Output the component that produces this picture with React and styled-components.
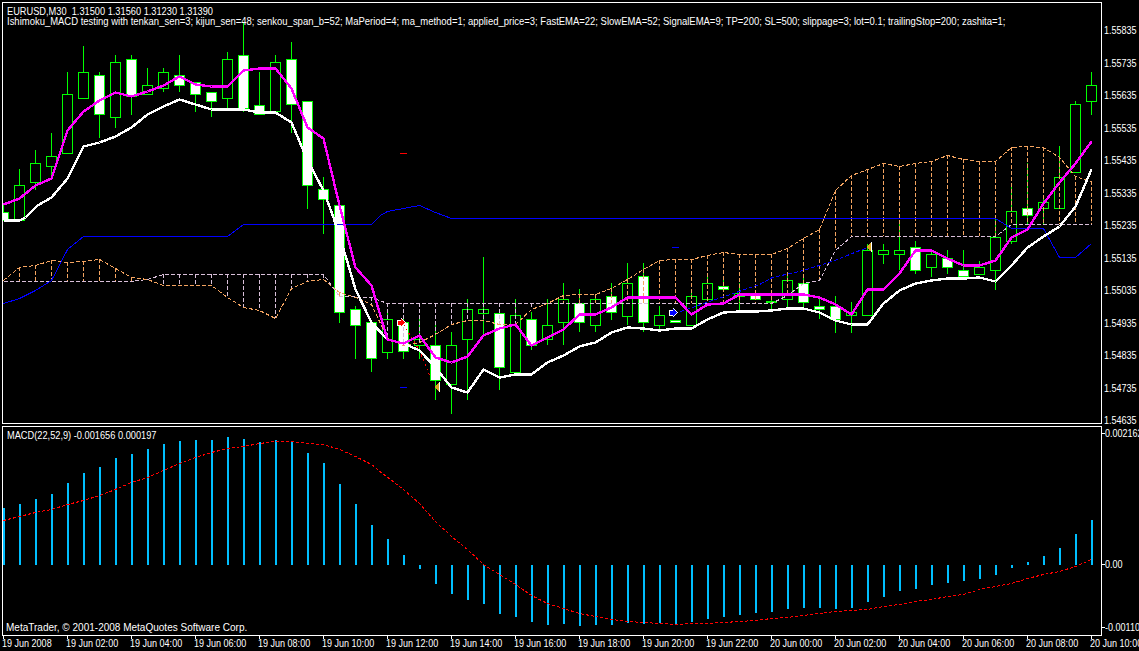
import React from "react";
import styled, { createGlobalStyle } from "styled-components";

const GlobalStyle = createGlobalStyle`
  html, body {
    margin: 0;
    background: #000;
  }
`;

const Terminal = styled.div`
  display: grid;
  grid-template-columns: 1100px 37px;
  grid-template-rows: 423px 210px 16px;
  width: 1139px;
  height: 651px;
  box-sizing: border-box;
  padding: 2px 0 0 2px;
  overflow: hidden;
  background: #000;
  color: #fff;
  font-family: "Liberation Sans", Arial, sans-serif;
  font-size: 11px;
  line-height: 10px;
  white-space: nowrap;
`;

const Pane = styled.div`
  position: relative;
  box-sizing: border-box;
  height: ${({ $h }) => $h}px;
  margin-top: ${({ $mt }) => $mt || 0}px;
  border: 1px solid #fff;
  overflow: hidden;
`;

const Plot = styled.svg`
  display: block;
  shape-rendering: crispEdges;
`;

const Legend = styled.div`
  position: absolute;
  left: 4px;
  top: 3px;
  display: flex;
  flex-direction: column;
  align-items: flex-start;
`;

/* the platform's bitmap font is as tall as Arial at 11px but much narrower */
const Squeezed = styled.span`
  display: inline-block;
  transform: scaleX(${({ $sx }) => $sx || 0.82});
  transform-origin: left center;
`;

const Copyright = styled.div`
  position: absolute;
  left: 3px;
  bottom: 3px;
`;

const PriceAxis = styled.div`
  display: flex;
  flex-direction: column;
  padding-top: 11.75px;
  height: 422px;
  box-sizing: border-box;
`;

const PriceRow = styled.div`
  flex: none;
  display: flex;
  align-items: center;
  gap: 2px;
  height: 32.5px;
  &::before {
    content: "";
    width: 3px;
    height: 1px;
    background: #fff;
  }
`;

const MacdAxis = styled.div`
  display: flex;
  flex-direction: column;
  padding-top: 2px;
  overflow: hidden;
`;

const MacdRow = styled.div`
  display: flex;
  align-items: center;
  height: 12px;
  margin-top: ${({ $mt }) => $mt || 0}px;
  &::before {
    content: "";
    flex: none;
    width: 3px;
    height: 1px;
    background: #fff;
  }
`;

const TimeAxis = styled.div`
  grid-column: 1 / 3;
  display: flex;
  overflow: hidden;
`;

const TimeLabel = styled.div`
  flex: none;
  width: 64px;
  position: relative;
  padding-top: 3px;
  &::before {
    content: "";
    position: absolute;
    left: 1px;
    top: 0;
    width: 1px;
    height: 4px;
    background: #fff;
  }
`;

const GREEN = "#00ff00";
const ORANGE = "#f4a460";
const THISTLE = "#d8bfd8";
const BLUE = "#0000ff";
const RED = "#ff0000";
const SKY = "#00bfff";

const barX = (i) => 3 + 16 * i;

// hi, body top, body bottom, lo, 1 = bear (white body)
const candles = [
  [205, 212, 220, 220, 1], [169, 185, 220, 220, 0], [150, 163, 182, 190, 0], [133, 156, 166, 175, 0],
  [72, 94, 153, 153, 0], [46, 72, 98, 98, 0], [72, 75, 114, 138, 1], [55, 62, 117, 128, 0],
  [55, 59, 96, 115, 1], [68, 85, 94, 95, 0], [68, 72, 88, 92, 0], [55, 75, 85, 92, 1],
  [82, 82, 94, 112, 1], [92, 92, 101, 117, 1], [52, 59, 98, 108, 0], [23, 55, 108, 112, 1],
  [72, 105, 114, 114, 1], [55, 62, 111, 111, 0], [42, 59, 104, 133, 1], [101, 101, 185, 209, 1],
  [177, 189, 199, 234, 1], [205, 205, 312, 323, 1], [306, 309, 325, 359, 1], [322, 322, 358, 372, 1],
  [310, 319, 352, 359, 0], [318, 322, 351, 359, 1], [317, 339, 345, 359, 0], [325, 345, 380, 400, 1],
  [332, 345, 384, 414, 0], [299, 309, 339, 400, 0], [257, 309, 313, 334, 0], [309, 313, 367, 390, 1],
  [299, 315, 372, 372, 0], [312, 319, 345, 350, 1], [299, 325, 339, 345, 0], [283, 299, 322, 345, 0],
  [289, 303, 322, 332, 1], [294, 299, 325, 332, 0], [283, 296, 312, 320, 1], [263, 283, 316, 325, 0],
  [263, 276, 322, 332, 1], [306, 315, 325, 332, 0], [320, 320, 322, 322, 1], [290, 296, 325, 325, 0],
  [275, 283, 299, 300, 0], [280, 286, 289, 292, 1], [283, 293, 296, 310, 0], [290, 295, 299, 299, 1],
  [290, 301, 302, 309, 0], [274, 280, 299, 309, 0], [274, 283, 302, 307, 1], [296, 306, 309, 319, 1],
  [296, 306, 319, 333, 1], [302, 312, 315, 333, 0], [244, 250, 315, 315, 0], [244, 250, 254, 264, 0],
  [224, 250, 254, 270, 0], [241, 247, 270, 274, 1], [250, 254, 267, 277, 0], [250, 258, 267, 274, 1],
  [250, 270, 276, 280, 1], [261, 267, 274, 274, 0], [217, 237, 270, 290, 0], [183, 211, 241, 244, 0],
  [163, 208, 215, 225, 1], [198, 202, 208, 225, 0], [146, 177, 208, 208, 0], [101, 104, 172, 172, 0],
  [72, 85, 101, 115, 0],
];

const whiteLine = [
  [3, 220], [19, 220], [25, 217], [37, 205], [51, 197], [67, 178], [83, 146], [99, 142], [115, 136], [131, 127],
  [147, 114], [163, 106], [179, 99], [195, 104], [211, 109], [227, 109], [243, 109], [259, 112], [275, 112],
  [291, 122], [307, 160], [323, 190], [333, 217], [345, 255], [355, 289], [371, 322], [387, 339], [403, 343],
  [419, 350], [435, 367], [451, 387], [467, 392], [483, 369], [499, 377], [515, 374], [531, 374], [547, 362],
  [563, 355], [579, 346], [595, 342], [611, 332], [627, 327], [643, 328], [659, 330], [675, 328], [691, 328],
  [707, 319], [723, 312], [739, 311], [755, 311], [771, 310], [787, 308], [803, 308], [819, 312], [835, 320],
  [851, 324], [867, 324], [883, 303], [899, 290], [915, 283], [931, 280], [947, 278], [963, 278], [979, 277],
  [995, 281], [1011, 265], [1027, 247], [1043, 236], [1059, 226], [1075, 206], [1091, 169],
];

const magentaLine = [
  [3, 204], [19, 198], [35, 185], [51, 178], [67, 130], [83, 111], [99, 100], [115, 92], [131, 96], [147, 91],
  [163, 85], [179, 76], [195, 84], [211, 86], [227, 86], [243, 70], [259, 68], [275, 68], [291, 88], [307, 127],
  [323, 138], [339, 205], [355, 267], [371, 285], [387, 339], [403, 343], [419, 335], [435, 357], [451, 362],
  [467, 356], [483, 335], [499, 328], [515, 324], [531, 345], [547, 337], [563, 329], [579, 314], [595, 314],
  [611, 307], [627, 297], [643, 297], [659, 297], [675, 297], [691, 314], [707, 304], [723, 303], [739, 294],
  [755, 294], [771, 294], [787, 294], [803, 294], [819, 297], [835, 304], [851, 314], [867, 289], [883, 289],
  [899, 273], [915, 250], [931, 250], [947, 258], [963, 265], [979, 265], [995, 260], [1011, 237], [1027, 229],
  [1043, 203], [1059, 182], [1075, 163], [1091, 141],
];

const blueLine = [
  [3, 303], [19, 298], [35, 290], [51, 280], [67, 249], [83, 236], [227, 236], [243, 224], [371, 224], [380, 215],
  [387, 211], [403, 208], [419, 205], [435, 212], [451, 218], [995, 218], [1011, 228], [1043, 228], [1059, 257],
  [1075, 257], [1091, 243],
];

const senkouA = [
  [3, 280], [19, 267], [35, 265], [51, 260], [67, 262], [83, 261], [99, 259], [115, 268], [131, 277], [147, 279],
  [163, 285], [179, 285], [195, 285], [211, 285], [227, 297], [243, 307], [259, 310], [275, 318], [291, 288],
  [307, 281], [323, 279], [339, 292], [355, 297], [371, 304], [387, 338], [403, 345], [419, 342], [435, 334],
  [451, 324], [467, 320], [483, 320], [499, 324], [515, 324], [531, 309], [547, 303], [563, 295], [579, 294],
  [595, 294], [611, 288], [627, 279], [643, 269], [659, 260], [675, 259], [691, 259], [707, 255], [723, 252],
  [739, 254], [755, 254], [771, 254], [787, 248], [803, 238], [819, 229], [835, 190], [851, 175], [867, 169],
  [883, 163], [899, 166], [915, 163], [931, 161], [947, 155], [963, 159], [979, 161], [995, 161], [1011, 147],
  [1027, 146], [1043, 147], [1059, 157], [1075, 176], [1091, 181],
];

const senkouB = [
  [3, 281], [131, 281], [147, 279], [163, 274], [323, 274], [339, 296], [371, 297], [387, 303], [771, 303],
  [787, 295], [803, 283], [819, 280], [835, 250], [851, 236], [995, 236], [1011, 224], [1091, 224],
];

const chikou = [[680, 311], [759, 284], [772, 277], [803, 270], [834, 260], [867, 247]];
const stopTrail = [[403, 324], [419, 350], [430, 377]];

const macdTops = [
  507, 503, 498, 493, 482, 472, 466, 457, 453, 448, 443, 440, 439, 439, 436, 438, 441, 439, 441, 452, 462, 483, 503,
  524, 538, 554, 568, 583, 593, 599, 603, 613, 616, 621, 624, 623, 625, 624, 624, 622, 623, 622, 624, 621, 618, 616,
  614, 612, 611, 608, 607, 607, 608, 607, 601, 596, 590, 588, 584, 582, 580, 578, 574, 567, 561, 555, 547, 533, 519,
];

const signalLine = [
  [3, 519], [19, 515], [35, 511], [51, 508], [67, 503], [83, 499], [99, 494], [115, 488], [131, 481], [147, 476],
  [163, 469], [179, 462], [195, 456], [211, 451], [227, 447], [243, 445], [259, 442], [275, 440], [291, 440],
  [307, 442], [323, 443], [339, 448], [355, 455], [371, 463], [382, 472], [403, 488], [419, 502], [435, 520],
  [451, 535], [467, 548], [483, 563], [499, 573], [515, 583], [531, 594], [547, 602], [563, 607], [579, 612],
  [595, 615], [611, 618], [627, 620], [643, 621], [659, 622], [675, 623], [691, 622], [707, 622], [723, 621],
  [739, 620], [755, 619], [771, 617], [787, 616], [803, 614], [819, 612], [835, 610], [851, 609], [867, 608],
  [883, 605], [899, 603], [915, 600], [931, 598], [947, 595], [963, 593], [979, 588], [995, 585], [1011, 582],
  [1027, 577], [1043, 573], [1059, 570], [1075, 565], [1091, 558],
];

const prices = [
  "1.55835", "1.55735", "1.55635", "1.55535", "1.55435", "1.55335", "1.55235",
  "1.55135", "1.55035", "1.54935", "1.54835", "1.54735", "1.54635",
];

const times = [
  "19 Jun 2008", "19 Jun 02:00", "19 Jun 04:00", "19 Jun 06:00", "19 Jun 08:00", "19 Jun 10:00",
  "19 Jun 12:00", "19 Jun 14:00", "19 Jun 16:00", "19 Jun 18:00", "19 Jun 20:00", "19 Jun 22:00",
  "20 Jun 00:00", "20 Jun 02:00", "20 Jun 04:00", "20 Jun 06:00", "20 Jun 08:00", "20 Jun 10:00",
];

const toPoints = (line) => line.map(([x, y]) => `${x + 0.5},${y + 0.5}`).join(" ");

const valueAt = (line, x) => {
  for (let i = 1; i < line.length; i++) {
    if (x <= line[i][0]) {
      const [x0, y0] = line[i - 1];
      const [x1, y1] = line[i];
      return y0 + ((x - x0) / (x1 - x0)) * (y1 - y0);
    }
  }
  return line[line.length - 1][1];
};

const cloudRibs = candles.map((_, i) => {
  const x = barX(i);
  return { x, a: Math.round(valueAt(senkouA, x)), b: Math.round(valueAt(senkouB, x)) };
});

const Candle = ({ x, data }) => {
  const [hi, top, bottom, lo, bear] = data;
  return (
    <g>
      <line x1={x + 0.5} x2={x + 0.5} y1={hi} y2={lo} stroke={GREEN} />
      <rect
        x={x - 4.5}
        y={top + 0.5}
        width={10}
        height={bottom - top}
        fill={bear ? "#fff" : "#000"}
        stroke={GREEN}
      />
    </g>
  );
};

const Arrow = ({ x, y, fill }) => (
  <g>
    <polygon
      points={`${x - 1},${y - 3} ${x + 3},${y - 3} ${x + 3},${y - 5} ${x + 8},${y} ${x + 3},${y + 5} ${x + 3},${y + 3} ${x - 1},${y + 3}`}
      fill="#fff"
    />
    <polygon
      points={`${x},${y - 2} ${x + 3},${y - 2} ${x + 3},${y - 4} ${x + 7},${y} ${x + 3},${y + 4} ${x + 3},${y + 2} ${x},${y + 2}`}
      fill={fill}
    />
  </g>
);

const Flag = ({ x, y }) => (
  <g>
    <polygon points={`${x},${y} ${x + 5},${y - 5} ${x + 5},${y + 5}`} fill="#daa520" />
    <line x1={x + 5.5} x2={x + 5.5} y1={y - 5} y2={y + 5} stroke="#fff" />
  </g>
);

const PriceChart = () => (
  <Plot width="1098" height="420" viewBox="3 3 1098 420">
    {candles.map((c, i) => (
      <Candle key={i} x={barX(i)} data={c} />
    ))}
    {cloudRibs.map(({ x, a, b }) =>
      Math.abs(a - b) > 1 ? (
        <line
          key={x}
          x1={x + 0.5}
          x2={x + 0.5}
          y1={Math.min(a, b)}
          y2={Math.max(a, b)}
          stroke={a < b ? ORANGE : THISTLE}
          strokeDasharray="4 2"
        />
      ) : null
    )}
    <polyline points={toPoints(senkouB)} fill="none" stroke={THISTLE} strokeDasharray="4 2" />
    <polyline points={toPoints(senkouA)} fill="none" stroke={ORANGE} strokeDasharray="4 2" />
    <polyline points={toPoints(blueLine)} fill="none" stroke={BLUE} />
    <polyline points={toPoints(chikou)} fill="none" stroke={BLUE} strokeDasharray="4 2" />
    <polyline points={toPoints(stopTrail)} fill="none" stroke={RED} strokeDasharray="2 3" />
    <polyline points={toPoints(whiteLine)} fill="none" stroke="#fff" strokeWidth="2.4" />
    <polyline points={toPoints(magentaLine)} fill="none" stroke="#ff00ff" strokeWidth="2.4" />
    <line x1="400" x2="407" y1="153.5" y2="153.5" stroke={RED} />
    <line x1="400" x2="407" y1="387.5" y2="387.5" stroke={BLUE} />
    <line x1="672" x2="679" y1="247.5" y2="247.5" stroke={BLUE} />
    <Arrow x={397.5} y={322.5} fill={RED} />
    <Arrow x={669.5} y={312.5} fill={BLUE} />
    <Flag x={434} y={387} />
    <Flag x={866} y={247} />
  </Plot>
);

const MacdChart = () => (
  <Plot width="1098" height="208" viewBox="3 426 1098 208">
    {macdTops.map((top, i) => (
      <rect
        key={i}
        x={barX(i)}
        y={Math.min(top, 564)}
        width="2"
        height={Math.abs(top - 564)}
        fill={SKY}
      />
    ))}
    <polyline points={toPoints(signalLine)} fill="none" stroke={RED} strokeDasharray="3 2" />
  </Plot>
);

export default function App() {
  return (
    <Terminal>
      <GlobalStyle />
      <Pane $h={422}>
        <PriceChart />
        <Legend>
          <Squeezed $sx={0.84}>EURUSD,M30&nbsp; 1.31500 1.31560 1.31230 1.31390</Squeezed>
          <Squeezed $sx={0.861}>
            Ishimoku_MACD testing with tenkan_sen=3; kijun_sen=48; senkou_span_b=52; MaPeriod=4; ma_method=1;
            applied_price=3; FastEMA=22; SlowEMA=52; SignalEMA=9; TP=200; SL=500; slippage=3; lot=0.1;
            trailingStop=200; zashita=1;
          </Squeezed>
        </Legend>
      </Pane>
      <PriceAxis>
        {prices.map((p) => (
          <PriceRow key={p}>
            <Squeezed>{p}</Squeezed>
          </PriceRow>
        ))}
      </PriceAxis>
      <Pane $h={210} $mt={1}>
        <MacdChart />
        <Legend>
          <Squeezed $sx={0.84}>MACD(22,52,9) -0.001656 0.000197</Squeezed>
        </Legend>
        <Copyright>
          <Squeezed $sx={0.91}>MetaTrader, © 2001-2008 MetaQuotes Software Corp.</Squeezed>
        </Copyright>
      </Pane>
      <MacdAxis>
        <MacdRow>
          <Squeezed>0.002162</Squeezed>
        </MacdRow>
        <MacdRow $mt={119}>
          <Squeezed>0.00</Squeezed>
        </MacdRow>
        <MacdRow $mt={51}>
          <Squeezed>-0.001101</Squeezed>
        </MacdRow>
      </MacdAxis>
      <TimeAxis>
        {times.map((t) => (
          <TimeLabel key={t}>
            <Squeezed>{t}</Squeezed>
          </TimeLabel>
        ))}
      </TimeAxis>
    </Terminal>
  );
}
